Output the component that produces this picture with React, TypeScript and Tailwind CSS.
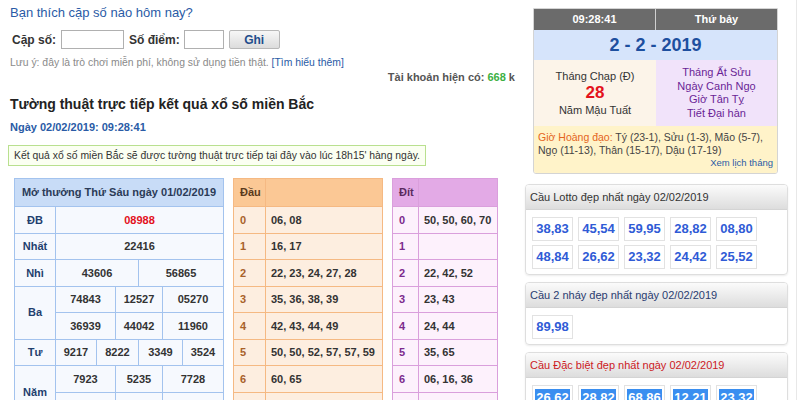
import React from "react";

const dauRows = [
  ["0", "06, 08"],
  ["1", "16, 17"],
  ["2", "22, 23, 24, 27, 28"],
  ["3", "35, 36, 38, 39"],
  ["4", "42, 43, 44, 49"],
  ["5", "50, 50, 52, 57, 57, 59"],
  ["6", "60, 65"],
  ["7", "70"],
];

const ditRows = [
  ["0", "50, 50, 60, 70"],
  ["1", ""],
  ["2", "22, 42, 52"],
  ["3", "23, 43"],
  ["4", "24, 44"],
  ["5", "35, 65"],
  ["6", "06, 16, 36"],
  ["7", "17, 27, 57, 57"],
];

const lotto = ["38,83", "45,54", "59,95", "28,82", "08,80", "48,84", "26,62", "23,32", "24,42", "25,52"];
const dacBiet = ["26,62", "28,82", "68,86", "12,21", "23,32"];

const Cell = ({ children, className = "" }: { children?: React.ReactNode; className?: string }) => (
  <div className={`bg-[#f6f9fe] flex items-center justify-center ${className}`}>{children}</div>
);

const KetQua = () => (
  <div className="w-[210px] bg-[#a3c3ee] p-px flex flex-col gap-px text-[11px] font-bold text-[#333]">
    <div className="h-[27px] bg-[#c8dcf7] flex items-center justify-center text-[#2b3b57]">
      Mở thưởng Thứ Sáu ngày 01/02/2019
    </div>
    <div className="flex gap-px h-[25.5px]">
      <Cell className="w-[40px] text-[#1f3f6e]">ĐB</Cell>
      <Cell className="flex-1 text-[#e3101c]">08988</Cell>
    </div>
    <div className="flex gap-px h-[25.5px]">
      <Cell className="w-[40px] text-[#1f3f6e]">Nhất</Cell>
      <Cell className="flex-1">22416</Cell>
    </div>
    <div className="flex gap-px h-[25.5px]">
      <Cell className="w-[40px] text-[#1f3f6e]">Nhì</Cell>
      <Cell className="flex-1">43606</Cell>
      <Cell className="w-[84px]">56865</Cell>
    </div>
    <div className="flex gap-px">
      <Cell className="w-[40px] text-[#1f3f6e]">Ba</Cell>
      <div className="flex-1 flex flex-col gap-px">
        <div className="flex gap-px h-[25.5px]">
          <Cell className="w-[59px]">74843</Cell>
          <Cell className="w-[46px]">12527</Cell>
          <Cell className="flex-1">05270</Cell>
        </div>
        <div className="flex gap-px h-[25.5px]">
          <Cell className="w-[59px]">36939</Cell>
          <Cell className="w-[46px]">44042</Cell>
          <Cell className="flex-1">11960</Cell>
        </div>
      </div>
    </div>
    <div className="flex gap-px h-[25.5px]">
      <Cell className="w-[40px] text-[#1f3f6e]">Tư</Cell>
      <Cell className="w-[40px]">9217</Cell>
      <Cell className="w-[41px]">8222</Cell>
      <Cell className="w-[43px]">3349</Cell>
      <Cell className="flex-1">3524</Cell>
    </div>
    <div className="flex gap-px">
      <Cell className="w-[40px] text-[#1f3f6e]">Năm</Cell>
      <div className="flex-1 flex flex-col gap-px">
        <div className="flex gap-px h-[25.5px]">
          <Cell className="w-[59px]">7923</Cell>
          <Cell className="w-[46px]">5235</Cell>
          <Cell className="flex-1">7728</Cell>
        </div>
        <div className="flex gap-px h-[25.5px]">
          <Cell className="w-[59px]">2050</Cell>
          <Cell className="w-[46px]">1557</Cell>
          <Cell className="flex-1">8836</Cell>
        </div>
      </div>
    </div>
  </div>
);

const LotoTable = ({
  title,
  rows,
  width,
  labelW,
  border,
  head,
  body,
  idx,
  headText,
}: {
  title: string;
  rows: string[][];
  width: string;
  labelW: string;
  border: string;
  head: string;
  body: string;
  idx: string;
  headText: string;
}) => (
  <div className={`${width} ${border} p-px flex flex-col gap-px text-[11px] font-bold text-[#333]`}>
    <div className="flex gap-px h-[27px]">
      <div className={`${labelW} ${head} ${headText} flex items-center pl-[6px]`}>{title}</div>
      <div className={`flex-1 ${head}`} />
    </div>
    {rows.map(([k, v]) => (
      <div key={k} className="flex gap-px h-[25.5px]">
        <div className={`${labelW} ${body} ${idx} flex items-center pl-[6px]`}>{k}</div>
        <div className={`flex-1 ${body} flex items-center pl-[5px] whitespace-nowrap`}>{v}</div>
      </div>
    ))}
  </div>
);

const Panel = ({ title, color, children }: { title: string; color: string; children: React.ReactNode }) => (
  <div className="w-[263px] border border-[#dedede] rounded-[4px] shadow-[0_1px_2px_rgba(0,0,0,0.08)] overflow-hidden">
    <div className={`h-[25px] px-[4px] flex items-center text-[11px] ${color} bg-gradient-to-b from-[#fbfbfb] to-[#dddddd] border-b border-[#d4d4d4]`}>
      {title}
    </div>
    <div className="pl-[6px] pt-[7px] pb-[5px] flex flex-wrap gap-x-[5px] gap-y-[4px]">{children}</div>
  </div>
);

const NumBox = ({ v, selected = false }: { v: string; selected?: boolean }) => (
  <div className="w-[41px] h-[24px] border border-[#e2e2e2] flex items-center justify-center text-[13px] font-bold text-[#2f5bd6]">
    {selected ? <span className="bg-[#3a8ef0] text-white leading-[17px] px-px">{v}</span> : v}
  </div>
);

export default function App() {
  return (
    <div className="w-[800px] h-[400px] overflow-hidden bg-white flex font-['Liberation_Sans',Arial,sans-serif]">
      <div className="w-[525px] shrink-0 pl-[10px] pr-[10px]">
        <div className="pt-[5px] text-[13px] leading-[16px] text-[#2a5ba6]">Bạn thích cặp số nào hôm nay?</div>
        <div className="mt-[9px] h-[19px] flex items-center text-[12px] font-bold text-[#333]">
          <span className="ml-[2px]">Cặp số:</span>
          <input className="ml-[5px] w-[63px] h-[19px] border border-[#b0b0b0] bg-white" />
          <span className="ml-[5px]">Số điểm:</span>
          <input className="ml-[4px] w-[40px] h-[19px] border border-[#b0b0b0] bg-white" />
          <button className="ml-[5px] w-[51px] h-[19px] border border-[#b8b8b8] rounded-[2px] bg-gradient-to-b from-[#f7f7f7] to-[#dcdcdc] text-[#1f4d8c] text-[12px] font-bold">
            Ghi
          </button>
        </div>
        <div className="mt-[7px] text-[10.4px] leading-[14px] text-[#8a8a8a]">
          Lưu ý: đây là trò chơi miễn phí, không sử dụng tiền thật.{" "}
          <span className="text-[#2a5ba6]">[Tìm hiểu thêm]</span>
        </div>
        <div className="text-right text-[11px] leading-[14px] font-bold text-[#555]">
          Tài khoản hiện có: <span className="text-[#3cb043]">668</span> k
        </div>
        <div className="mt-[11px] text-[14px] leading-[18px] font-bold text-[#222]">
          Tường thuật trực tiếp kết quả xổ số miền Bắc
        </div>
        <div className="mt-[7px] text-[11px] leading-[14px] font-bold text-[#2a5ba6]">Ngày 02/02/2019: 09:28:41</div>
        <div className="mt-[11px] -ml-[2px] inline-flex items-center h-[21px] px-[5px] border border-[#b9e08f] bg-[#fbfff2] text-[10.4px] text-[#333]">
          Kết quả xổ số miền Bắc sẽ được tường thuật trực tiếp tại đây vào lúc 18h15' hàng ngày.
        </div>
        <div className="mt-[12px] ml-[4px] flex gap-[9px] items-start">
          <KetQua />
          <LotoTable
            title="Đầu"
            rows={dauRows}
            width="w-[150px]"
            labelW="w-[31px]"
            border="bg-[#f5b983]"
            head="bg-[#fbc895]"
            body="bg-[#fdeee0]"
            idx="text-[#a8612a]"
            headText="text-[#5a3a1c]"
          />
          <LotoTable
            title="Đít"
            rows={ditRows}
            width="w-[106px]"
            labelW="w-[25px]"
            border="bg-[#da9fdc]"
            head="bg-[#e3aae6]"
            body="bg-[#fdf1fc]"
            idx="text-[#7c2a8d]"
            headText="text-[#5a2a5e]"
          />
        </div>
      </div>

      <div className="w-[263px] shrink-0 pt-[8px]">
        <div className="ml-[8px] w-[245px] border border-[#d4d4d4] rounded-b-[3px] overflow-hidden text-center">
          <div className="h-[21px] flex bg-[#6b6b6b] text-white text-[11px] font-bold">
            <div className="w-[122px] flex items-center justify-center border-r border-[#d0d0d0]">09:28:41</div>
            <div className="flex-1 flex items-center justify-center">Thứ bảy</div>
          </div>
          <div className="h-[30px] bg-[#d6e4fb] flex items-center justify-center text-[18px] font-bold text-[#1d4f9f]">
            2 - 2 - 2019
          </div>
          <div className="h-[66px] flex">
            <div className="w-[122px] bg-[#fcf4e9] flex flex-col items-center justify-center text-[11px] text-[#333] leading-[14px]">
              <div>Tháng Chạp (Đ)</div>
              <div className="text-[17px] leading-[20px] font-bold text-[#e3121c]">28</div>
              <div>Năm Mậu Tuất</div>
            </div>
            <div className="flex-1 bg-[#f1e3fa] flex flex-col items-center justify-center text-[11px] leading-[13.5px] text-[#6a1f96]">
              <div>Tháng Ất Sửu</div>
              <div>Ngày Canh Ngọ</div>
              <div>Giờ Tân Tỵ</div>
              <div>Tiết Đại hàn</div>
            </div>
          </div>
          <div className="h-[47px] bg-[#fff3c9] px-[4px] pt-[5px] text-left text-[10.5px] leading-[12.5px] text-[#444]">
            <span className="text-[#e4641c]">Giờ Hoàng đạo:</span> Tý (23-1), Sửu (1-3), Mão (5-7),
            <br />
            Ngọ (11-13), Thân (15-17), Dậu (17-19)
            <div className="text-right text-[9.5px] leading-[13px] text-[#2a5ba6]">Xem lịch tháng</div>
          </div>
        </div>

        <div className="mt-[10px] flex flex-col gap-[7px]">
          <Panel title="Cầu Lotto đẹp nhất ngày 02/02/2019" color="text-[#333]">
            {lotto.map((v, i) => (
              <NumBox key={i} v={v} />
            ))}
          </Panel>
          <Panel title="Cầu 2 nháy đẹp nhất ngày 02/02/2019" color="text-[#2a3c70]">
            <NumBox v="89,98" />
          </Panel>
          <Panel title="Cầu Đặc biệt đẹp nhất ngày 02/02/2019" color="text-[#cc1a1f]">
            {dacBiet.map((v, i) => (
              <NumBox key={i} v={v} selected />
            ))}
          </Panel>
        </div>
      </div>
      <div className="w-[8px] shrink-0" />
      <div className="w-px h-full bg-[#e8e8e8]" />
    </div>
  );
}
